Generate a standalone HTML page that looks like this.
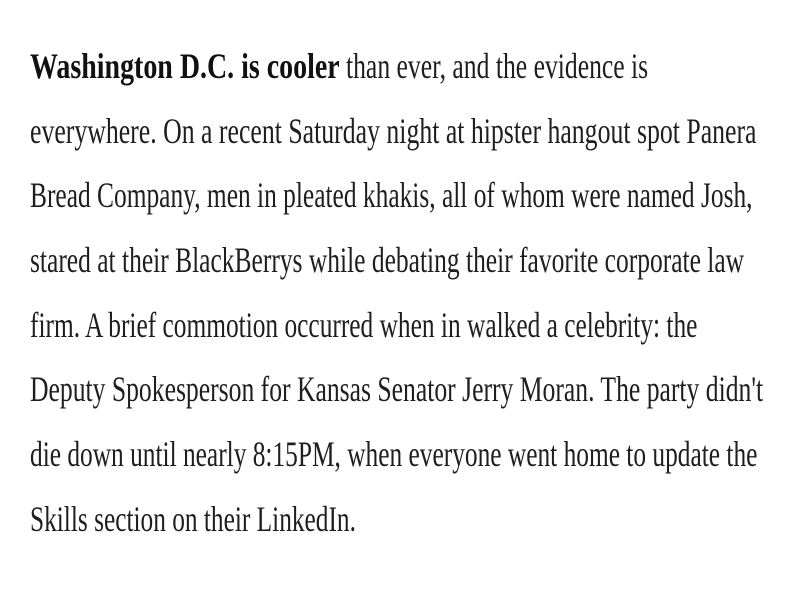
<!DOCTYPE html>
<html><head><meta charset="utf-8"><style>
html,body{margin:0;padding:0;background:#fff;width:800px;height:600px;overflow:hidden}
.l{position:absolute;left:30px;font-family:"Liberation Serif",serif;font-size:36px;color:#1e1e1e;white-space:nowrap;transform-origin:0 0;line-height:1}
b{color:#111}
</style></head><body>
<div class="l" style="top:48px;transform:scaleX(0.776)"><b>Washington D.C. is cooler</b></div>
<div class="l" style="top:48px;left:346px;transform:scaleX(0.712)">than ever, and the evidence is</div>
<div class="l" style="top:113px;transform:scaleX(0.716)">everywhere. On a recent Saturday night at hipster hangout spot Panera</div>
<div class="l" style="top:177px;transform:scaleX(0.706)">Bread Company, men in pleated khakis, all of whom were named Josh,</div>
<div class="l" style="top:242px;transform:scaleX(0.708)">stared at their BlackBerrys while debating their favorite corporate law</div>
<div class="l" style="top:307px;transform:scaleX(0.705)">firm. A brief commotion occurred when in walked a celebrity: the</div>
<div class="l" style="top:371px;transform:scaleX(0.712)">Deputy Spokesperson for Kansas Senator Jerry Moran. The party didn't</div>
<div class="l" style="top:436px;transform:scaleX(0.705)">die down until nearly 8:15PM, when everyone went home to update the</div>
<div class="l" style="top:501px;transform:scaleX(0.704)">Skills section on their LinkedIn.</div>
</body></html>
